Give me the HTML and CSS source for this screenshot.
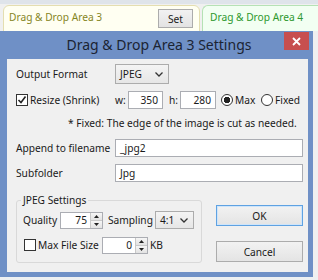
FILE: index.html
```html
<!DOCTYPE html>
<html>
<head>
  <meta charset="UTF-8">
  <title>Drag &amp; Drop Area 3 Settings</title>
  <link rel="stylesheet" href="styles.css">
</head>
<body>
  <div class="areas">
    <div class="area area-amarilla">
      <span class="area-nombre">Drag &amp; Drop Area 3</span>
      <button class="boton-set">Set</button>
    </div>
    <div class="area area-verde">
      <span class="area-nombre">Drag &amp; Drop Area 4</span>
    </div>
  </div>

  <div class="ventana-fila">
    <div class="dialogo">
      <div class="titulo">
        <span class="titulo-texto">Drag &amp; Drop Area 3 Settings</span>
        <button class="cerrar" aria-label="Close">
          <svg width="9" height="9" viewBox="0 0 9 9"><path d="M1 1L8 8M8 1L1 8" stroke="#fff" stroke-width="1.8" fill="none"/></svg>
        </button>
      </div>

      <div class="contenido">
        <div class="fila fila-formato">
          <span class="etiqueta">Output Format</span>
          <div class="lista lista-formato">
            <span class="lista-valor">JPEG</span>
            <svg class="flecha" width="8" height="5" viewBox="0 0 8 5"><path d="M0.5 0.5L4 4L7.5 0.5" stroke="#333" stroke-width="1.3" fill="none"/></svg>
          </div>
        </div>

        <div class="fila fila-resize">
          <span class="etiqueta check">
            <span class="caja">
              <svg width="10" height="10" viewBox="0 0 10 10"><path d="M1.5 5L4 7.5L8.5 1.5" stroke="#222" stroke-width="1.6" fill="none"/></svg>
            </span>
            Resize (Shrink)
          </span>
          <span class="dim dim-w">w:</span>
          <div class="campo campo-w">350</div>
          <span class="dim dim-h">h:</span>
          <div class="campo campo-h">280</div>
          <span class="opcion opcion-max"><span class="radio marcado"></span>Max</span>
          <span class="opcion"><span class="radio"></span>Fixed</span>
        </div>

        <p class="nota">* Fixed: The edge of the image is cut as needed.</p>

        <div class="fila fila-texto">
          <span class="etiqueta">Append to filename</span>
          <div class="campo campo-largo">_jpg2</div>
        </div>

        <div class="fila fila-texto">
          <span class="etiqueta">Subfolder</span>
          <div class="campo campo-largo">Jpg</div>
        </div>

        <div class="inferior">
          <fieldset class="grupo">
            <legend>JPEG Settings</legend>
            <div class="fila fila-grupo">
              <span class="etiqueta-calidad">Quality</span>
              <div class="giro giro-calidad">
                <span class="giro-valor">75</span>
                <span class="giro-flechas">
                  <span class="giro-boton"><svg width="5" height="3" viewBox="0 0 5 3"><path d="M0 3L2.5 0L5 3Z" fill="#222"/></svg></span>
                  <span class="giro-boton"><svg width="5" height="3" viewBox="0 0 5 3"><path d="M0 0L2.5 3L5 0Z" fill="#222"/></svg></span>
                </span>
              </div>
              <span class="etiqueta-muestreo">Sampling</span>
              <div class="lista lista-muestreo">
                <span class="lista-valor">4:1</span>
                <svg class="flecha" width="8" height="5" viewBox="0 0 8 5"><path d="M0.5 0.5L4 4L7.5 0.5" stroke="#333" stroke-width="1.3" fill="none"/></svg>
              </div>
            </div>
            <div class="fila fila-grupo fila-maximo">
              <span class="check check-maximo"><span class="caja"></span>Max File Size</span>
              <div class="giro giro-maximo">
                <span class="giro-valor">0</span>
                <span class="giro-flechas">
                  <span class="giro-boton"><svg width="5" height="3" viewBox="0 0 5 3"><path d="M0 3L2.5 0L5 3Z" fill="#222"/></svg></span>
                  <span class="giro-boton"><svg width="5" height="3" viewBox="0 0 5 3"><path d="M0 0L2.5 3L5 0Z" fill="#222"/></svg></span>
                </span>
              </div>
              <span class="unidad">KB</span>
            </div>
          </fieldset>

          <div class="botones">
            <button class="boton boton-ok">OK</button>
            <button class="boton boton-cancelar">Cancel</button>
          </div>
        </div>
      </div>
    </div>
    <div class="resto"></div>
  </div>
</body>
</html>
```

FILE: styles.css
```css
/* Estilos generales */
body {
  font-family: 'Noto Sans', 'Liberation Sans', sans-serif;
  font-size: 10.2px;
  color: #1a1a1a;
  margin: 0;
  padding: 0;
  width: 318px;
  height: 280px;
  overflow: hidden;
  white-space: nowrap;
  background-color: #eef0f2;
}

button {
  font-family: inherit;
  font-size: inherit;
  color: inherit;
  padding: 0;
  margin: 0;
  cursor: pointer;
}

/* Areas de arrastre */
.areas {
  display: flex;
  height: 26px;
  padding-top: 5px;
  background: linear-gradient(#dfe4ea 0 4px, #f0f0f0 4px);
  overflow: hidden;
}

.area {
  display: flex;
  align-items: flex-start;
  height: 40px;
  box-sizing: border-box;
  border: 1px solid;
  border-radius: 6px 6px 0 0;
  padding: 3px 6px 0 5px;
}

.area-nombre {
  line-height: 16px;
}

.area-amarilla {
  width: 197px;
  margin-left: 3px;
  background-color: #fffff2;
  border-color: #e4deb0;
  color: #86861f;
}

.area-verde {
  flex: 1;
  margin-left: 2px;
  padding-left: 7px;
  border-right: none;
  border-radius: 6px 0 0 0;
  background-color: #f2fff2;
  border-color: #b5e2b5;
  color: #2e982e;
}

.boton-set {
  margin-left: auto;
  width: 35px;
  height: 19px;
  border: 1px solid #acacac;
  background: linear-gradient(#f2f2f2, #e3e3e3);
  color: #1a1a1a;
}

/* Ventana de dialogo */
.ventana-fila {
  display: flex;
}

.dialogo {
  width: 313px;
  height: 246px;
  box-sizing: border-box;
  background-color: #6f90c6;
  display: flex;
  flex-direction: column;
}

.titulo {
  height: 28px;
  display: grid;
  grid-template-columns: 1fr auto 1fr;
  align-items: start;
}

.titulo-texto {
  grid-column: 2;
  font-size: 14px;
  line-height: 28px;
  color: #1b2433;
  padding-left: 5px;
}

.cerrar {
  grid-column: 3;
  justify-self: end;
  width: 25px;
  height: 18px;
  margin: 1px 4px 0 0;
  border: none;
  background-color: #c74f4f;
  display: flex;
  align-items: center;
  justify-content: center;
}

.resto {
  flex: 1;
  background-color: #f0f0f0;
}

/* Contenido */
.contenido {
  flex: 1;
  margin: 0 5px 5px 7px;
  padding: 5px 0 0 9px;
  background-color: #f0f0f0;
  display: flex;
  flex-direction: column;
}

.fila {
  display: flex;
  align-items: center;
}

.etiqueta {
  width: 99px;
  flex-shrink: 0;
}

.fila-formato {
  height: 20px;
}

.lista {
  display: flex;
  align-items: center;
  justify-content: space-between;
  box-sizing: border-box;
  border: 1px solid #acacac;
  background: linear-gradient(#f4f4f4, #e6e6e6);
  padding: 0 5px 0 4px;
}

.lista-formato {
  width: 54px;
  height: 20px;
}

.campo {
  box-sizing: border-box;
  height: 18px;
  border: 1px solid #abadb3;
  background-color: #fff;
  line-height: 16px;
  padding: 0 4px;
}

/* Fila de redimensionar */
.fila-resize {
  margin-top: 7px;
  height: 18px;
}

.check {
  display: flex;
  align-items: center;
}

.caja {
  width: 12px;
  height: 12px;
  box-sizing: border-box;
  border: 1px solid #333;
  background-color: #fff;
  margin-right: 2px;
  display: flex;
  align-items: center;
  justify-content: center;
}

.dim-w {
  width: 13px;
}

.dim-h {
  width: 11px;
  margin-left: 6px;
}

.campo-w {
  width: 35px;
  text-align: right;
}

.campo-h {
  width: 36px;
  text-align: right;
}

.opcion {
  display: flex;
  align-items: center;
  gap: 2px;
}

.opcion-max {
  width: 35px;
  margin-left: 5px;
  margin-right: 5px;
}

.radio {
  width: 12px;
  height: 12px;
  box-sizing: border-box;
  border: 1px solid #333;
  border-radius: 50%;
  background-color: #fff;
}

.radio.marcado {
  background: radial-gradient(circle, #222 0 3px, #fff 3.5px);
}

.nota {
  margin: 7px 0 0 52px;
  line-height: 14px;
}

.fila-texto {
  margin-top: 9px;
}

.fila-texto + .fila-texto {
  margin-top: 7px;
}

.campo-largo {
  width: 188px;
}

/* Grupo JPEG */
.inferior {
  display: flex;
  align-items: flex-start;
  margin-top: 11px;
}

.grupo {
  width: 186px;
  box-sizing: border-box;
  margin: 0;
  padding: 4px 0 8px 6px;
  border: 1px solid #d9d9d9;
  border-radius: 3px;
}

.grupo legend {
  padding: 0 2px;
  margin-left: -2px;
  line-height: 14px;
}

.fila-grupo {
  height: 18px;
}

.fila-maximo {
  margin-top: 7px;
}

.etiqueta-calidad {
  width: 37px;
}

.etiqueta-muestreo {
  width: 47px;
  margin-left: 5px;
}

.lista-muestreo {
  width: 39px;
  height: 18px;
}

.giro {
  display: flex;
  box-sizing: border-box;
  height: 17px;
  border: 1px solid #abadb3;
  background-color: #fff;
}

.giro-calidad {
  width: 43px;
}

.giro-maximo {
  width: 46px;
}

.giro-valor {
  flex: 1;
  text-align: right;
  line-height: 15px;
  padding-right: 3px;
}

.giro-flechas {
  width: 12px;
  display: flex;
  flex-direction: column;
}

.giro-boton {
  flex: 1;
  display: flex;
  align-items: center;
  justify-content: center;
  background: linear-gradient(#f6f6f6, #e2e2e2);
  border-left: 1px solid #c8c8c8;
}

.giro-boton + .giro-boton {
  border-top: 1px solid #c8c8c8;
}

.check-maximo {
  width: 78px;
  margin-left: 1px;
}

.unidad {
  margin-left: 2px;
}

/* Botones */
.botones {
  display: flex;
  flex-direction: column;
  margin-left: 14px;
  width: 87px;
}

.boton {
  height: 21px;
  border: 1px solid #acacac;
  background: linear-gradient(#f2f2f2, #e4e4e4);
}

.boton-ok {
  margin-top: 12px;
  border-color: #5fa2e2;
  box-shadow: inset 0 0 0 1px #cfe5fa;
}

.boton-cancelar {
  margin-top: 15px;
}
```
